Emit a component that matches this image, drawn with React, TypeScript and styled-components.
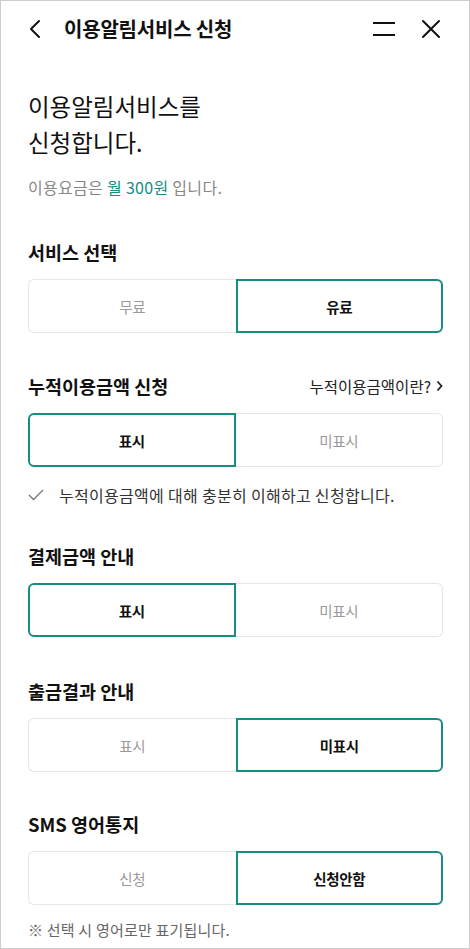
import React from "react";
import styled, { createGlobalStyle } from "styled-components";

const GlobalStyle = createGlobalStyle`
  html, body { margin: 0; padding: 0; background: #fff; }
  body {
    font-family: "Noto Sans CJK KR", "Noto Sans", sans-serif;
    color: #111;
    -webkit-font-smoothing: antialiased;
  }
  * { box-sizing: border-box; }
`;

const TEAL = "#168c83";

const Frame = styled.div`
  width: 470px;
  height: 949px;
  border: 1px solid #cdcdcd;
  background: #fff;
  display: flex;
  flex-direction: column;
  overflow: hidden;
`;

const Header = styled.header`
  height: 55px;
  display: flex;
  align-items: center;
  padding: 0 28px 0 27px;
`;

const IconButton = styled.button`
  border: 0;
  background: none;
  padding: 0;
  display: flex;
  align-items: center;
  justify-content: center;
  color: #111;
`;

const HeaderTitle = styled.h1`
  margin: 0 0 0 22px;
  font-size: 20px;
  font-weight: 700;
  letter-spacing: -0.2px;
  line-height: 26px;
  flex: 1;
`;

const HeaderActions = styled.div`
  display: flex;
  align-items: center;
  gap: 25px;
`;

const Content = styled.main`
  padding: 32px 26px 0 27px;
  display: flex;
  flex-direction: column;
`;

const Heading = styled.h2`
  margin: 0;
  font-size: 23.5px;
  font-weight: 400;
  line-height: 36px;
  letter-spacing: 0;
  color: #111;
`;

const Fee = styled.p`
  margin: 16px 0 0;
  font-size: 16px;
  line-height: 22px;
  letter-spacing: 0.3px;
  color: #888;
`;

const Accent = styled.span`
  color: ${TEAL};
`;

const Section = styled.section<{ $top: number }>`
  margin-top: ${(p) => p.$top}px;
  display: flex;
  flex-direction: column;
`;

const SectionHead = styled.div`
  display: flex;
  align-items: center;
  justify-content: space-between;
  margin-bottom: 14px;
`;

const SectionTitle = styled.h3`
  margin: 0;
  font-size: 18.5px;
  font-weight: 700;
  line-height: 26px;
  color: #111;
`;

const InfoLink = styled.a`
  display: flex;
  align-items: center;
  gap: 5px;
  font-size: 15.5px;
  line-height: 22px;
  color: #222;
  text-decoration: none;
`;

const Segment = styled.div`
  display: grid;
  grid-template-columns: 1fr 1fr;
  height: 54px;
`;

const Option = styled.button<{ $active: boolean; $side: "left" | "right" }>`
  height: 54px;
  background: #fff;
  font-family: inherit;
  font-size: 14.5px;
  letter-spacing: -0.3px;
  padding: 0;
  cursor: pointer;
  color: ${(p) => (p.$active ? "#111" : "#9a9a9a")};
  font-weight: ${(p) => (p.$active ? 700 : 400)};
  border: ${(p) => (p.$active ? `2px solid ${TEAL}` : "1px solid #e6e6e6")};
  ${(p) => (!p.$active && p.$side === "left" ? "border-right: 0;" : "")}
  ${(p) => (!p.$active && p.$side === "right" ? "border-left: 0;" : "")}
  border-radius: ${(p) => (p.$side === "left" ? "6px 0 0 6px" : "0 6px 6px 0")};
`;

const CheckRow = styled.div`
  margin-top: 17px;
  display: flex;
  align-items: center;
  gap: 15px;
  font-size: 16px;
  line-height: 22px;
  letter-spacing: 0.3px;
  color: #333;
`;

const Note = styled.p`
  margin: 15px 0 0;
  font-size: 15px;
  line-height: 20px;
  letter-spacing: 0.2px;
  color: #666;
`;

type SegProps = {
  options: [string, string];
  selected: 0 | 1;
};

const SegmentControl = ({ options, selected }: SegProps) => (
  <Segment>
    <Option $side="left" $active={selected === 0}>
      {options[0]}
    </Option>
    <Option $side="right" $active={selected === 1}>
      {options[1]}
    </Option>
  </Segment>
);

export default function App() {
  return (
    <>
      <GlobalStyle />
      <Frame>
        <Header>
          <IconButton aria-label="뒤로">
            <svg width="14" height="20" viewBox="0 0 14 20">
              <path
                d="M11 2 L3 10 L11 18"
                fill="none"
                stroke="#111"
                strokeWidth="2"
                strokeLinecap="round"
                strokeLinejoin="round"
              />
            </svg>
          </IconButton>
          <HeaderTitle>이용알림서비스 신청</HeaderTitle>
          <HeaderActions>
            <IconButton aria-label="메뉴">
              <svg width="24" height="20" viewBox="0 0 24 20">
                <path d="M1 4 H23 M1 16 H23" stroke="#111" strokeWidth="2" />
              </svg>
            </IconButton>
            <IconButton aria-label="닫기">
              <svg width="20" height="20" viewBox="0 0 20 20">
                <path
                  d="M2 2 L18 18 M18 2 L2 18"
                  stroke="#111"
                  strokeWidth="2"
                  strokeLinecap="round"
                />
              </svg>
            </IconButton>
          </HeaderActions>
        </Header>
        <Content>
          <Heading>
            이용알림서비스를
            <br />
            신청합니다.
          </Heading>
          <Fee>
            이용요금은 <Accent>월 300원</Accent> 입니다.
          </Fee>

          <Section $top={41}>
            <SectionHead>
              <SectionTitle>서비스 선택</SectionTitle>
            </SectionHead>
            <SegmentControl options={["무료", "유료"]} selected={1} />
          </Section>

          <Section $top={40}>
            <SectionHead>
              <SectionTitle>누적이용금액 신청</SectionTitle>
              <InfoLink href="#">
                누적이용금액이란?
                <svg width="7" height="12" viewBox="0 0 7 12">
                  <path
                    d="M1.5 1.5 L5.5 6 L1.5 10.5"
                    fill="none"
                    stroke="#222"
                    strokeWidth="1.8"
                  />
                </svg>
              </InfoLink>
            </SectionHead>
            <SegmentControl options={["표시", "미표시"]} selected={0} />
            <CheckRow>
              <svg width="16" height="12" viewBox="0 0 16 12">
                <path
                  d="M1 6 L5.5 10.5 L15 1"
                  fill="none"
                  stroke="#777"
                  strokeWidth="1.3"
                />
              </svg>
              누적이용금액에 대해 충분히 이해하고 신청합니다.
            </CheckRow>
          </Section>

          <Section $top={37}>
            <SectionHead>
              <SectionTitle>결제금액 안내</SectionTitle>
            </SectionHead>
            <SegmentControl options={["표시", "미표시"]} selected={0} />
          </Section>

          <Section $top={41}>
            <SectionHead>
              <SectionTitle>출금결과 안내</SectionTitle>
            </SectionHead>
            <SegmentControl options={["표시", "미표시"]} selected={1} />
          </Section>

          <Section $top={39}>
            <SectionHead>
              <SectionTitle>SMS 영어통지</SectionTitle>
            </SectionHead>
            <SegmentControl options={["신청", "신청안함"]} selected={1} />
          </Section>

          <Note>※ 선택 시 영어로만 표기됩니다.</Note>
        </Content>
      </Frame>
    </>
  );
}
